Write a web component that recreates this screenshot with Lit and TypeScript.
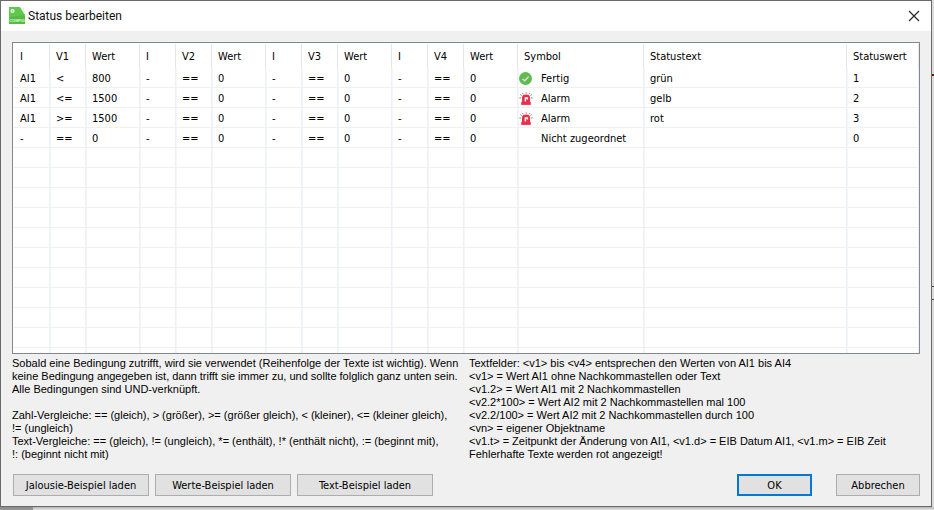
import { LitElement, html, css, svg, nothing } from "lit";
import { customElement } from "lit/decorators.js";

type SymbolKind = "ok" | "alarm" | "";

interface Condition {
  input: string;
  op: string;
  value: string;
}

interface StatusRow {
  conditions: Condition[];
  symbol: SymbolKind;
  label: string;
  text: string;
  value: string;
}

const unused: Condition = { input: "-", op: "==", value: "0" };

const row = (
  first: Condition,
  symbol: SymbolKind,
  label: string,
  text: string,
  value: string,
): StatusRow => ({ conditions: [first, unused, unused, unused], symbol, label, text, value });

const rows: StatusRow[] = [
  row({ input: "AI1", op: "<", value: "800" }, "ok", "Fertig", "grün", "1"),
  row({ input: "AI1", op: "<=", value: "1500" }, "alarm", "Alarm", "gelb", "2"),
  row({ input: "AI1", op: ">=", value: "1500" }, "alarm", "Alarm", "rot", "3"),
  row(unused, "", "Nicht zugeordnet", "", "0"),
];

const columnCount = 15;
const emptyRows = 10;

const conditionHelp = [
  "Sobald eine Bedingung zutrifft, wird sie verwendet (Reihenfolge der Texte ist wichtig). Wenn",
  "keine Bedingung angegeben ist, dann trifft sie immer zu, und sollte folglich ganz unten sein.",
  "Alle Bedingungen sind UND-verknüpft.",
  "",
  "Zahl-Vergleiche: == (gleich), > (größer), >= (größer gleich), < (kleiner), <= (kleiner gleich),",
  "!= (ungleich)",
  "Text-Vergleiche: == (gleich), != (ungleich), *= (enthält), !* (enthält nicht), := (beginnt mit),",
  "!: (beginnt nicht mit)",
];

const fieldHelp = [
  "Textfelder: <v1> bis <v4> entsprechen den Werten von AI1 bis AI4",
  "<v1> = Wert AI1 ohne Nachkommastellen oder Text",
  "<v1.2> = Wert AI1 mit 2 Nachkommastellen",
  "<v2.2*100> = Wert AI2 mit 2 Nachkommastellen mal 100",
  "<v2.2/100> = Wert AI2 mit 2 Nachkommastellen durch 100",
  "<vn> = eigener Objektname",
  "<v1.t> = Zeitpunkt der Änderung von AI1, <v1.d> = EIB Datum AI1, <v1.m> = EIB Zeit",
  "Fehlerhafte Texte werden rot angezeigt!",
];

const okIcon = svg`
  <circle cx="6.5" cy="6.5" r="6.5" fill="#5fbd4e"/>
  <path d="M3.6 7 L5.8 8.8 L9.6 4.6" fill="none" stroke="#f0dcf3" stroke-width="1.3"/>`;

const alarmIcon = svg`
  <path d="M3.4 1 L4.4 2.4 M7.2 0.2 V1.8 M11 1 L10 2.4" stroke="#e8788a" stroke-width="1" fill="none"/>
  <path d="M0.4 6 H2.2 M11.8 6 H13.6 M1.2 2.5 L2.6 3.7 M12.8 2.5 L11.4 3.7" stroke="#6d8f98" stroke-width="1" fill="none"/>
  <path d="M3 10.4 V5.6 Q3 2.4 7 2.4 Q11 2.4 11 5.6 V10.4 Z" fill="#e8304a"/>
  <rect x="2.2" y="10" width="9.6" height="2.9" fill="#e8304a"/>
  <path d="M6.4 9.4 V6 H8.4 V7.6" stroke="#fff" stroke-width="1.4" fill="none"/>`;

@customElement("status-table")
export class StatusTable extends LitElement {
  static styles = css`
    :host {
      display: block;
      border: 1px solid #828790;
      background: #fff;
      padding: 1px 0 0 1px;
      overflow: hidden;
    }
    .table {
      width: 100%;
      table-layout: fixed;
      border-collapse: separate;
      border-spacing: 0;
    }
    .narrow { width: 36px; }
    .wert { width: 54px; }
    .symbol { width: 126px; }
    .status { width: 72px; }
    th {
      height: 24px;
      box-sizing: border-box;
      padding: 0 6px;
      border-right: 1px solid #e5e5e5;
      font-weight: normal;
      text-align: left;
      white-space: nowrap;
    }
    td {
      height: 20px;
      box-sizing: border-box;
      padding: 2px 5px 0 6px;
      border-right: 1px solid #edf1f7;
      border-bottom: 1px solid #f0f0f0;
      box-shadow: 1px 0 #f3f6fb;
      white-space: nowrap;
      line-height: 16px;
    }
    .rest td { height: 5px; border-bottom: 0; line-height: 1px; }
    .symcell { padding-left: 1px; }
    .sym { display: flex; align-items: center; gap: 8px; }
    .icon { width: 14px; height: 14px; flex: none; }
  `;

  private icon(kind: SymbolKind) {
    return html`<svg class="icon" viewBox="0 0 14 14" aria-hidden="true">
      ${kind === "ok" ? okIcon : kind === "alarm" ? alarmIcon : nothing}
    </svg>`;
  }

  private blankCells() {
    return Array.from({ length: columnCount }, () => html`<td></td>`);
  }

  render() {
    return html`
      <table class="table">
        <colgroup>
          ${[1, 2, 3, 4].map(
            () => html`<col class="narrow" /><col class="narrow" /><col class="wert" />`,
          )}
          <col class="symbol" /><col /><col class="status" />
        </colgroup>
        <thead>
          <tr>
            ${[1, 2, 3, 4].map((n) => html`<th>I</th><th>V${n}</th><th>Wert</th>`)}
            <th>Symbol</th><th>Statustext</th><th>Statuswert</th>
          </tr>
        </thead>
        <tbody>
          ${rows.map(
            (r) => html`<tr>
              ${r.conditions.map(
                (c) => html`<td>${c.input}</td><td>${c.op}</td><td>${c.value}</td>`,
              )}
              <td class="symcell"><div class="sym">${this.icon(r.symbol)}${r.label}</div></td>
              <td>${r.text}</td>
              <td>${r.value}</td>
            </tr>`,
          )}
          ${Array.from({ length: emptyRows }, () => html`<tr>${this.blankCells()}</tr>`)}
          <tr class="rest">${this.blankCells()}</tr>
        </tbody>
      </table>
    `;
  }
}

@customElement("app-root")
export class AppRoot extends LitElement {
  static styles = css`
    :host {
      display: block;
      box-sizing: border-box;
      min-height: 100vh;
      padding: 0 2px 3px 0;
      background:
        linear-gradient(#7a0f14, #7a0f14) right 74px / 2px 2px no-repeat,
        linear-gradient(#444, #444) right 286px / 2px 1px no-repeat,
        linear-gradient(#444, #444) right 299px / 2px 1px no-repeat,
        linear-gradient(#8a8a8a, #9a9a9a) left bottom / 33px 3px no-repeat,
        linear-gradient(#b4b4b4, #e4e4e4) bottom / 100% 3px no-repeat,
        #dcdcdc;
      color: #000;
      font: 11px/13px "DejaVu Sans Condensed", "Noto Sans", sans-serif;
    }
    .window {
      border: 1px solid #6a6a6a;
      background: #f0f0f0;
    }
    .titlebar {
      display: flex;
      align-items: center;
      height: 30px;
      padding: 0 11px 0 7px;
      background: #fff;
    }
    .logo { width: 18px; height: 18px; flex: none; }
    .title {
      flex: 1;
      margin: 0 0 0 2px;
      font: 12px/16px Roboto, "Noto Sans", sans-serif;
      color: #111;
    }
    .close {
      display: flex;
      padding: 0;
      border: 0;
      background: none;
    }
    .cross { width: 12px; height: 12px; }
    .content { padding: 11px 11px 10px 11px; }
    .help {
      display: grid;
      grid-template-columns: minmax(0, 457fr) minmax(0, 451fr);
      margin-top: 3px;
      font-family: "Liberation Sans", sans-serif;
    }
    .line { min-height: 13px; white-space: nowrap; }
    .buttons {
      display: flex;
      gap: 6px;
      margin-top: 13px;
      padding-left: 1px;
    }
    .button {
      box-sizing: border-box;
      width: 136px;
      height: 22px;
      padding: 0;
      border: 1px solid #adadad;
      border-radius: 0;
      background: #e1e1e1;
      color: #000;
      font: inherit;
    }
    .ok {
      width: 75px;
      margin-left: auto;
      margin-right: 18px;
      border: 2px solid #0078d7;
    }
    .cancel { width: 84px; }
  `;

  private lines(list: string[]) {
    return list.map((l) => html`<div class="line">${l}</div>`);
  }

  render() {
    return html`
      <main class="window">
        <header class="titlebar">
          <svg class="logo" viewBox="0 0 18 18" aria-hidden="true">
            <path d="M1 0 H12 L17 8 V17 H1 Z" fill="#52bd40" />
            <path d="M1 0 H12 L17 8 L1 10 Z" fill="#6bd055" opacity="0.6" />
            <path d="M12 0 L16 1 L17 8 Z" fill="#ececec" />
            <circle cx="4.5" cy="4" r="1.4" fill="none" stroke="#fff" stroke-width="1.2" />
            <text x="9" y="15" text-anchor="middle" font-family="Liberation Sans" font-weight="bold" font-size="4" fill="#e4f8df">CONFIG</text>
          </svg>
          <h1 class="title">Status bearbeiten</h1>
          <button class="close" aria-label="Schließen">
            <svg class="cross" viewBox="0 0 12 12">
              <path d="M1 1 L11 11 M11 1 L1 11" stroke="#222" stroke-width="1.1" fill="none" />
            </svg>
          </button>
        </header>
        <div class="content">
          <status-table></status-table>
          <section class="help">
            <div>${this.lines(conditionHelp)}</div>
            <div>${this.lines(fieldHelp)}</div>
          </section>
          <footer class="buttons">
            <button class="button">Jalousie-Beispiel laden</button>
            <button class="button">Werte-Beispiel laden</button>
            <button class="button">Text-Beispiel laden</button>
            <button class="button ok">OK</button>
            <button class="button cancel">Abbrechen</button>
          </footer>
        </div>
      </main>
    `;
  }
}
